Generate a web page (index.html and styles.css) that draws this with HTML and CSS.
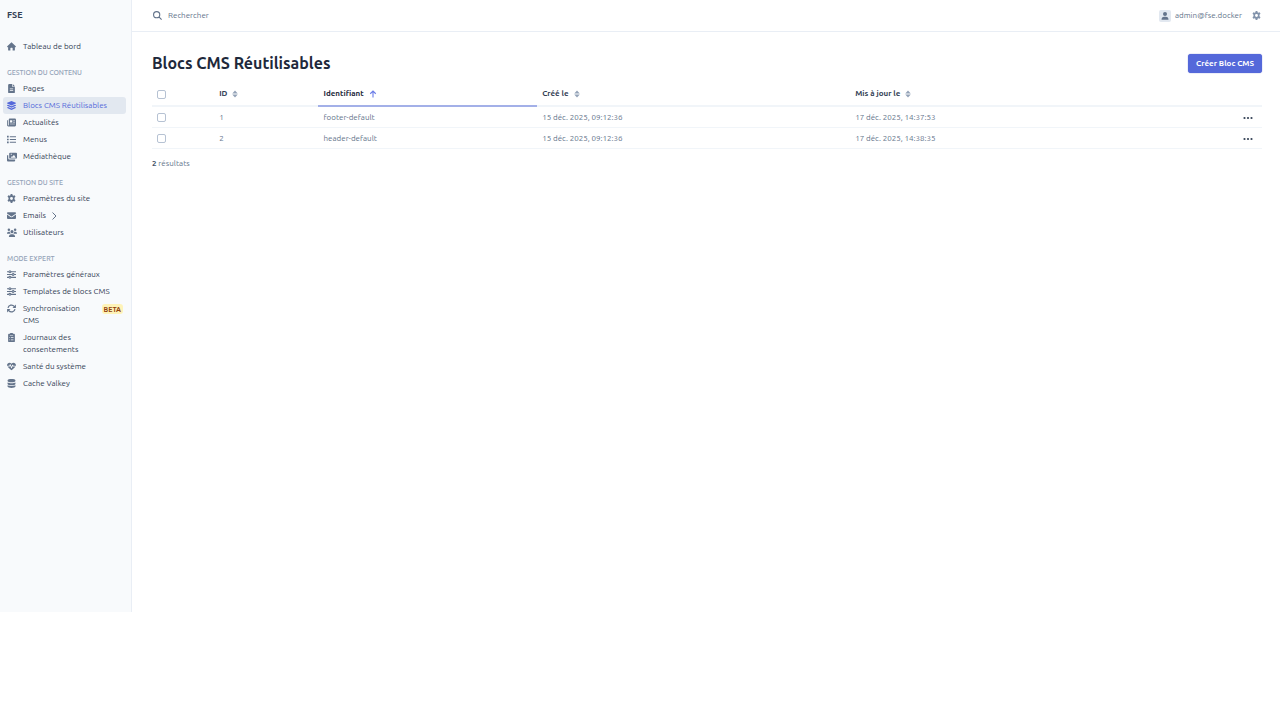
FILE: index.html
```html
<!DOCTYPE html>
<html lang="fr">

<head>
    <meta charset="UTF-8">
    <meta name="viewport" content="width=device-width, initial-scale=1.0">
    <title>Blocs CMS Réutilisables</title>
    <link rel="stylesheet" href="styles.css">
</head>

<body>
    <!-- Icônes -->
    <svg class="sprite" aria-hidden="true">
        <symbol id="i-home" viewBox="0 0 16 16"><path d="M8 .5 16 7.800l-.9 1.400H14V14a1 1 0 0 1-1 1h-3v-4a1 1 0 0 0-1-1H7a1 1 0 0 0-1 1v4H3a1 1 0 0 1-1-1V9.200H.9L0 7.800z"/></symbol>
        <symbol id="i-file" viewBox="0 0 16 16"><path fill-rule="evenodd" d="M4 0h5v4a1 1 0 0 0 1 1h4v9.500a1.500 1.500 0 0 1-1.500 1.500h-9A1.500 1.500 0 0 1 2 14.500V2a2 2 0 0 1 2-2zm6.200 0L14 3.900h-3.800zM5 8v1.300h6V8zm0 3v1.300h6V11z"/></symbol>
        <symbol id="i-layers" viewBox="0 0 16 16"><path d="M8 0l7.600 3.300c.5.200.5.900 0 1.100L8 7.800.4 4.400c-.5-.2-.5-.9 0-1.100zM2 6.500l6 2.700 6-2.700 1.600.8c.5.200.5.900 0 1.100L8 11.800.4 8.400c-.5-.2-.5-.9 0-1.100zM2 10.600l6 2.700 6-2.700 1.600.8c.5.200.5.900 0 1.100L8 16 .4 12.500c-.5-.2-.5-.9 0-1.100z"/></symbol>
        <symbol id="i-news" viewBox="0 0 16 16"><path fill-rule="evenodd" d="M5 1h9a2 2 0 0 1 2 2v10a2 2 0 0 1-2 2H2.500A2.500 2.500 0 0 1 0 12.500V4h1.500v8.500a.8.8 0 0 0 1.600 0V3A2 2 0 0 1 5 1zm.4 2.800v4h4v-4zm5.600 0V5h3V3.800zm0 2.800v1.200h3V6.600zM5.400 10v1.200H14V10z"/></symbol>
        <symbol id="i-list" viewBox="0 0 16 16"><path d="M0 1.500h3v3H0zM5 2.200h11v1.700H5zM0 6.500h3v3H0zm5 .7h11v1.700H5zM0 11.500h3v3H0zm5 .7h11v1.700H5z"/></symbol>
        <symbol id="i-images" viewBox="0 0 16 16"><path fill-rule="evenodd" d="M5 1h9.500A1.500 1.500 0 0 1 16 2.500v6.500a1.500 1.500 0 0 1-1.500 1.500H5A1.500 1.500 0 0 1 3.500 9V2.500A1.500 1.500 0 0 1 5 1zM6 9h8l-3-4.500L9 7.500l-1-1zM6 2.800v1.700h1.700V2.800z"/><path d="M0 5h2v5a2 2 0 0 0 2 2h9v1.500a1.500 1.500 0 0 1-1.500 1.500h-10A1.500 1.500 0 0 1 0 13.500z"/></symbol>
        <symbol id="i-gear" viewBox="0 0 16 16"><path fill-rule="evenodd" d="M6.500 0h3l.4 2.300 1.500.9 2.200-.8 1.500 2.600L13.300 6.500v3l1.800 1.500-1.500 2.600-2.200-.8-1.500.9-.4 2.300h-3l-.4-2.300-1.500-.9-2.200.8L.9 11l1.800-1.500v-3L.9 5l1.500-2.600 2.200.8 1.500-.9zM8 5.400a2.600 2.600 0 1 0 0 5.200 2.600 2.600 0 0 0 0-5.200z"/></symbol>
        <symbol id="i-mail" viewBox="0 0 16 16"><path d="M1.500 2h13A1.500 1.500 0 0 1 16 3.500v.8L8.900 9.400a1.500 1.500 0 0 1-1.800 0L0 4.300v-.8A1.500 1.500 0 0 1 1.500 2zM0 6l6.300 4.600a2.900 2.900 0 0 0 3.400 0L16 6v6.500a1.500 1.500 0 0 1-1.500 1.500h-13A1.500 1.500 0 0 1 0 12.500z"/></symbol>
        <symbol id="i-users" viewBox="0 0 16 16"><circle cx="3" cy="2.800" r="2"/><circle cx="13" cy="2.800" r="2"/><circle cx="8" cy="5.800" r="2.500"/><path d="M0 9c0-2 1-3.200 2.700-3.200h1.800C4.500 7.200 5 8.200 6 9zM16 9c0-2-1-3.200-2.700-3.200h-1.800c0 1.400-.5 2.400-1.500 3.200zM3 14.500c0-3 1.500-4.700 3.700-4.700h2.600c2.200 0 3.700 1.700 3.700 4.700z"/></symbol>
        <symbol id="i-sliders" viewBox="0 0 16 16"><path fill="none" stroke="currentColor" stroke-width="2" d="M0 3h3.500M7 3h9M0 8h9M12.500 8H16M0 13h3.500M7 13h9"/><g fill="none" stroke="currentColor" stroke-width="1.800"><circle cx="5.200" cy="3" r="1.700"/><circle cx="10.800" cy="8" r="1.700"/><circle cx="5.200" cy="13" r="1.700"/></g></symbol>
        <symbol id="i-sync" viewBox="0 0 16 16"><path fill="none" stroke="currentColor" stroke-width="2.200" d="M1.800 7a6.200 6.200 0 0 1 11-2.700l1.500 1.500M14.200 9a6.200 6.200 0 0 1-11 2.700l-1.500-1.500"/><path d="M15.800 1v6h-6zM.2 15V9h6z"/></symbol>
        <symbol id="i-clipboard" viewBox="0 0 16 16"><path fill-rule="evenodd" d="M5.500 1.500a2.500 2.500 0 0 1 5 0h2A1.500 1.500 0 0 1 14 3v11.500a1.500 1.500 0 0 1-1.500 1.500h-9A1.500 1.500 0 0 1 2 14.500V3a1.500 1.500 0 0 1 1.500-1.500zm-.5 2V4.500h6v-1zm-.8 4.200V9h1.300V7.700zm2.800 0V9h4.500V7.700zm-2.800 3.800v1.300h1.300v-1.300zm2.800 0v1.300h4.500v-1.300z"/></symbol>
        <symbol id="i-heart" viewBox="0 0 16 16"><path d="M0 6.500C-.3 1 5.500-.2 8 3c2.500-3.200 8.300-2 8 3.500h-4.600l-1-1.800h-1L8 8.300 6.300 4H5.200L4.100 6.500zM1 8.200h4l.8-1.700L7.500 11h1l1.500-4 .6 1.200H15c-1.500 2.800-5 5-7 6.600C6 13.200 2.500 11 1 8.200z"/></symbol>
        <symbol id="i-database" viewBox="0 0 16 16"><path d="M1 2.500C1-.8 15-.8 15 2.500v1C15 6.700 1 6.700 1 3.500zM1 6.200c3 1.800 11 1.800 14 0v2.500c0 3.200-14 3.200-14 0zM1 11.200c3 1.800 11 1.800 14 0v2.300c0 3.300-14 3.300-14 0z"/></symbol>
        <symbol id="i-search" viewBox="0 0 16 16"><path fill="none" stroke="currentColor" stroke-width="2" d="M6.500 1a5.500 5.500 0 1 1 0 11 5.500 5.500 0 0 1 0-11zM10.500 10.500 15.300 15.300"/></symbol>
        <symbol id="i-user" viewBox="0 0 16 16"><circle cx="8" cy="4" r="4"/><path d="M1 15.500C1 11.500 3 9.500 6.300 9.500h3.400c3.300 0 5.300 2 5.300 6z"/></symbol>
        <symbol id="i-sort" viewBox="0 0 12 16"><path d="M6 1l5.500 6H.5zM6 15 .5 9h11z"/></symbol>
        <symbol id="i-up" viewBox="0 0 16 16"><path fill="none" stroke="currentColor" stroke-width="2.200" d="M8 15V2M2.500 7.500 8 2l5.500 5.500"/></symbol>
        <symbol id="i-chevron" viewBox="0 0 10 16"><path fill="none" stroke="currentColor" stroke-width="2" d="M1 1l7 7-7 7"/></symbol>
        <symbol id="i-dots" viewBox="0 0 20 6"><circle cx="3" cy="3" r="2.200"/><circle cx="10" cy="3" r="2.200"/><circle cx="17" cy="3" r="2.200"/></symbol>
    </svg>

    <div class="wrapper">
        <aside class="sidebar">
            <a class="logo" href="#">FSE</a>
            <nav class="menu">
                <a class="menu-item" href="#"><svg><use href="#i-home"/></svg><span>Tableau de bord</span></a>

                <h2 class="menu-header">Gestion du contenu</h2>
                <a class="menu-item" href="#"><svg><use href="#i-file"/></svg><span>Pages</span></a>
                <a class="menu-item active" href="#"><svg><use href="#i-layers"/></svg><span>Blocs CMS Réutilisables</span></a>
                <a class="menu-item" href="#"><svg><use href="#i-news"/></svg><span>Actualités</span></a>
                <a class="menu-item" href="#"><svg><use href="#i-list"/></svg><span>Menus</span></a>
                <a class="menu-item" href="#"><svg class="wide"><use href="#i-images"/></svg><span>Médiathèque</span></a>

                <h2 class="menu-header">Gestion du site</h2>
                <a class="menu-item" href="#"><svg><use href="#i-gear"/></svg><span>Paramètres du site</span></a>
                <a class="menu-item" href="#"><svg><use href="#i-mail"/></svg><span>Emails</span><svg class="chevron"><use href="#i-chevron"/></svg></a>
                <a class="menu-item" href="#"><svg class="wide"><use href="#i-users"/></svg><span>Utilisateurs</span></a>

                <h2 class="menu-header">Mode expert</h2>
                <a class="menu-item" href="#"><svg><use href="#i-sliders"/></svg><span>Paramètres généraux</span></a>
                <a class="menu-item" href="#"><svg><use href="#i-sliders"/></svg><span>Templates de blocs CMS</span></a>
                <a class="menu-item" href="#"><svg><use href="#i-sync"/></svg><span>Synchronisation CMS</span><span class="badge">BETA</span></a>
                <a class="menu-item" href="#"><svg><use href="#i-clipboard"/></svg><span>Journaux des consentements</span></a>
                <a class="menu-item" href="#"><svg><use href="#i-heart"/></svg><span>Santé du système</span></a>
                <a class="menu-item" href="#"><svg><use href="#i-database"/></svg><span>Cache Valkey</span></a>
            </nav>
        </aside>

        <div class="main">
            <header class="topbar">
                <label class="search">
                    <svg><use href="#i-search"/></svg>
                    <input type="search" placeholder="Rechercher" aria-label="Rechercher">
                </label>
                <a class="user" href="#">
                    <span class="avatar"><svg><use href="#i-user"/></svg></span>
                    admin@fse.docker
                </a>
                <button class="settings" type="button" aria-label="Réglages"><svg><use href="#i-gear"/></svg></button>
            </header>

            <main class="content">
                <div class="content-header">
                    <h1>Blocs CMS Réutilisables</h1>
                    <button class="btn-primary" type="button">Créer Bloc CMS</button>
                </div>

                <table class="datagrid">
                    <colgroup>
                        <col class="col-check">
                        <col class="col-id">
                        <col class="col-name">
                        <col class="col-date">
                        <col class="col-date">
                        <col>
                    </colgroup>
                    <thead>
                        <tr>
                            <th><input type="checkbox" aria-label="Tout sélectionner"></th>
                            <th><a href="#">ID <svg class="sort"><use href="#i-sort"/></svg></a></th>
                            <th class="sorted"><a href="#">Identifiant <svg class="sort-up"><use href="#i-up"/></svg></a></th>
                            <th><a href="#">Créé le <svg class="sort"><use href="#i-sort"/></svg></a></th>
                            <th><a href="#">Mis à jour le <svg class="sort"><use href="#i-sort"/></svg></a></th>
                            <th></th>
                        </tr>
                    </thead>
                    <tbody>
                        <tr>
                            <td><input type="checkbox" aria-label="Sélectionner 1"></td>
                            <td>1</td>
                            <td>footer-default</td>
                            <td>15 déc. 2025, 09:12:36</td>
                            <td>17 déc. 2025, 14:37:53</td>
                            <td class="actions"><button type="button" aria-label="Actions"><svg><use href="#i-dots"/></svg></button></td>
                        </tr>
                        <tr>
                            <td><input type="checkbox" aria-label="Sélectionner 2"></td>
                            <td>2</td>
                            <td>header-default</td>
                            <td>15 déc. 2025, 09:12:36</td>
                            <td>17 déc. 2025, 14:38:35</td>
                            <td class="actions"><button type="button" aria-label="Actions"><svg><use href="#i-dots"/></svg></button></td>
                        </tr>
                    </tbody>
                </table>

                <p class="results"><strong>2</strong> résultats</p>
            </main>
        </div>
    </div>
</body>

</html>
```
FILE: styles.css
```css
* {
    margin: 0;
    padding: 0;
    box-sizing: border-box;
}

body {
    background: #fff;
    color: #64748b;
    font-family: Ubuntu, "Open Sans", sans-serif;
    font-size: 8px;
    line-height: 12px;
}

a {
    color: inherit;
    text-decoration: none;
}

button,
input {
    font: inherit;
    color: inherit;
    border: 0;
    background: none;
}

button {
    cursor: pointer;
}

svg {
    display: block;
    width: 9px;
    height: 9px;
    fill: currentColor;
    flex: none;
}

.sprite {
    display: none;
}

.wrapper {
    display: flex;
    align-items: flex-start;
}

/* Menu latéral */
.sidebar {
    flex: none;
    width: 132px;
    min-height: 85vh;
    padding: 9px 5px 0 3px;
    background: #f8fafc;
    border-right: 1px solid #e9eef5;
}

.logo {
    display: block;
    padding-left: 4px;
    margin-bottom: 17px;
    color: #334155;
    font-size: 9px;
    font-weight: 600;
}

.menu-header {
    padding: 11px 4px 2px;
    color: #94a3b8;
    font-size: 7px;
    font-weight: 500;
    text-transform: uppercase;
}

.menu-item {
    display: flex;
    align-items: flex-start;
    padding: 3px 3px 2px 4px;
    border-radius: 3px;
    color: #334155;
}

.menu-item svg {
    margin: 1px 7px 0 0;
    color: #64748b;
}

.menu-item .wide {
    width: 10px;
    height: 10px;
    margin-right: 6px;
}

.menu-item .chevron {
    width: 5px;
    height: 8px;
    margin: 2px 0 0 6px;
}

.menu-item.active {
    background: #e2e8f0;
    color: #5468da;
}

.menu-item.active svg {
    color: #5468da;
}

.badge {
    margin: 1px 0 0 auto;
    padding: 0 2px;
    border-radius: 3px;
    background: #fef3b8;
    color: #92400e;
    font-size: 7px;
    font-weight: 600;
    line-height: 10px;
}

.menu-item span + .badge {
    margin-left: 16px;
}

/* Barre du haut */
.main {
    flex: 1;
    min-width: 0;
}

.topbar {
    display: flex;
    align-items: center;
    height: 32px;
    padding: 0 19px 0 21px;
    border-bottom: 1px solid #e9eef5;
}

.search {
    display: flex;
    align-items: center;
    flex: 1;
    gap: 6px;
}

.search input {
    flex: 1;
    outline: 0;
}

.search input::placeholder {
    color: #64748b;
}

.user {
    display: flex;
    align-items: center;
    gap: 4px;
}

.avatar {
    padding: 2px;
    border-radius: 2px;
    background: #e2e8f0;
}

.avatar svg {
    width: 8px;
    height: 8px;
}

.settings {
    margin-left: 10px;
    color: #8293ab;
}

/* Contenu */
.content {
    padding: 20px 18px 0 20px;
}

.content-header {
    display: flex;
    align-items: center;
    justify-content: space-between;
    height: 22px;
}

h1 {
    color: #1e293b;
    font-size: 16px;
    font-weight: 600;
    line-height: 22px;
}

.btn-primary {
    padding: 4px 8px 3px;
    border-radius: 3px;
    background: #5468da;
    color: #fff;
    font-weight: 600;
    box-shadow: 0 0 1px #4355c0;
}

.datagrid {
    width: 100%;
    margin-top: 8px;
    border-collapse: separate;
    border-spacing: 0;
    table-layout: fixed;
}

.col-check {
    width: 5.6%;
}

.col-id {
    width: 9.4%;
}

.col-name {
    width: 19.7%;
}

.col-date {
    width: 28.2%;
}

.datagrid th,
.datagrid td {
    height: 21px;
    padding: 1px 5px 0;
    text-align: left;
    vertical-align: middle;
    border-bottom: 1px solid #f1f5f9;
}

.datagrid th {
    height: 25px;
    border-bottom: 2px solid #f1f5f9;
    color: #334155;
    font-weight: 600;
}

.datagrid th a {
    display: flex;
    align-items: center;
    gap: 5px;
}

.datagrid .sorted {
    border-color: #a3b0e8;
    color: #1e293b;
}

.datagrid .sort {
    width: 6px;
    height: 8px;
    color: #94a3b8;
}

.datagrid .sort-up {
    width: 8px;
    height: 8px;
    color: #6b7de8;
}

.datagrid input {
    display: block;
    appearance: none;
    width: 9px;
    height: 9px;
    border: 1px solid #b6c2d3;
    border-radius: 2px;
    background: #fff;
}

.datagrid .actions button {
    display: block;
    margin-left: auto;
    padding: 4px;
    color: #334155;
}

.actions svg {
    width: 10px;
    height: 4px;
}

.results {
    margin-top: 9px;
}

.results strong {
    color: #475569;
}
```
